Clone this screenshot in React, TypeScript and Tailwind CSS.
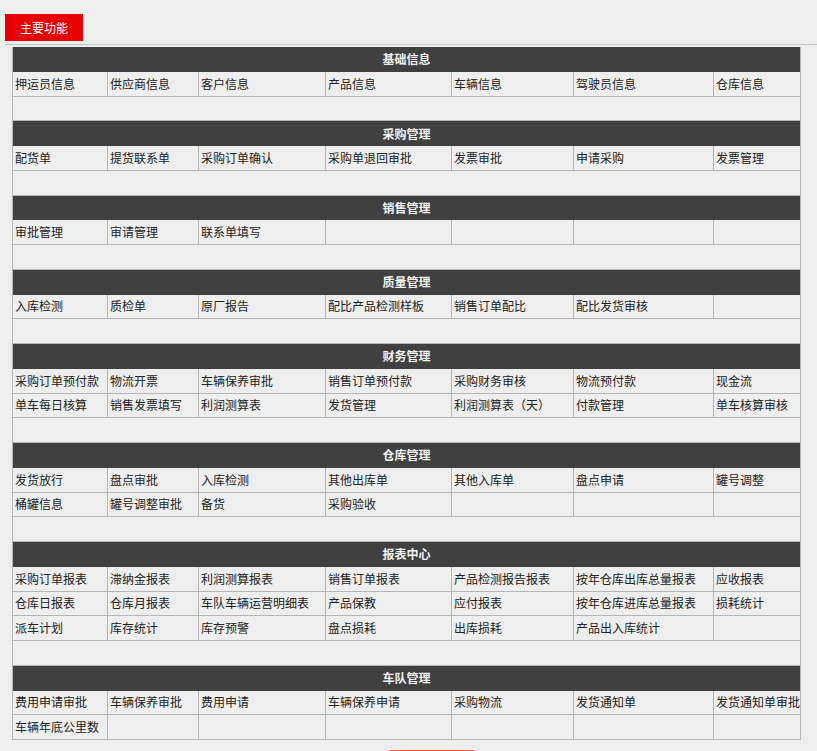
const FONT = { fontFamily: '"Microsoft YaHei", "Noto Sans CJK SC", "Noto Sans", sans-serif' }

type Section = { title: string; rows: string[][]; blank?: boolean }

const sections: Section[] = [
  { title: '基础信息', rows: [['押运员信息', '供应商信息', '客户信息', '产品信息', '车辆信息', '驾驶员信息', '仓库信息']], blank: true },
  { title: '采购管理', rows: [['配货单', '提货联系单', '采购订单确认', '采购单退回审批', '发票审批', '申请采购', '发票管理']], blank: true },
  { title: '销售管理', rows: [['审批管理', '审请管理', '联系单填写', '', '', '', '']], blank: true },
  { title: '质量管理', rows: [['入库检测', '质检单', '原厂报告', '配比产品检测样板', '销售订单配比', '配比发货审核', '']], blank: true },
  {
    title: '财务管理',
    rows: [
      ['采购订单预付款', '物流开票', '车辆保养审批', '销售订单预付款', '采购财务审核', '物流预付款', '现金流'],
      ['单车每日核算', '销售发票填写', '利润测算表', '发货管理', '利润测算表（天）', '付款管理', '单车核算审核'],
    ],
    blank: true,
  },
  {
    title: '仓库管理',
    rows: [
      ['发货放行', '盘点审批', '入库检测', '其他出库单', '其他入库单', '盘点申请', '罐号调整'],
      ['桶罐信息', '罐号调整审批', '备货', '采购验收', '', '', ''],
    ],
    blank: true,
  },
  {
    title: '报表中心',
    rows: [
      ['采购订单报表', '滞纳金报表', '利润测算报表', '销售订单报表', '产品检测报告报表', '按年仓库出库总量报表', '应收报表'],
      ['仓库日报表', '仓库月报表', '车队车辆运营明细表', '产品保教', '应付报表', '按年仓库进库总量报表', '损耗统计'],
      ['派车计划', '库存统计', '库存预警', '盘点损耗', '出库损耗', '产品出入库统计', ''],
    ],
    blank: true,
  },
  {
    title: '车队管理',
    rows: [
      ['费用申请审批', '车辆保养审批', '费用申请', '车辆保养申请', '采购物流', '发货通知单', '发货通知单审批'],
      ['车辆年底公里数', '', '', '', '', '', ''],
    ],
  },
]

function Row({ cells }: { cells: string[] }) {
  return (
    <div className="grid grid-cols-[95px_91px_127px_126px_122px_140px_1fr] h-[24.75px] border-b border-[#b5b5b5]">
      {cells.map((c, i) => (
        <div
          key={i}
          className={`flex items-center pl-[2px] text-[12px] text-[#222] whitespace-nowrap overflow-hidden ${i < 6 ? 'border-r border-[#b5b5b5]' : ''}`}
        >
          {c}
        </div>
      ))}
    </div>
  )
}

export default function App() {
  return (
    <div className="min-h-screen bg-[#eeeeee] overflow-hidden" style={FONT}>
      <div className="pt-[14px] pl-[5px]">
        <div className="w-[78px] h-[27px] bg-[#e60000] text-white text-[12px] flex items-center justify-center">主要功能</div>
      </div>
      <div className="mt-[3px] ml-[5px] h-px bg-[#c4c4c4]" />

      <div className="mt-[2px] ml-[12px] w-[789px] border-l border-r border-[#b5b5b5]">
        {sections.map(s => (
          <div key={s.title}>
            <div className="h-[24.75px] bg-[#404040] text-[#f2f2f2] text-[12px] font-bold flex items-center justify-center">
              {s.title}
            </div>
            {s.rows.map((r, i) => <Row key={i} cells={r} />)}
            {s.blank && <div className="h-[24.75px] border-b border-[#b5b5b5]" />}
          </div>
        ))}
      </div>

      {/* bottom action button, only its top edge shows in the viewport */}
      <div className="mt-[10px] ml-[390px] w-[84px] h-[30px] bg-[#ff5b1e]" />
    </div>
  )
}
